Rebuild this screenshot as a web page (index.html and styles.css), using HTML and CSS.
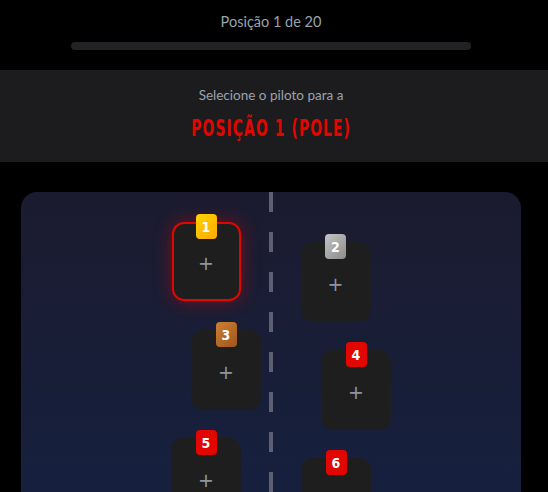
FILE: index.html
```html
<!DOCTYPE html>
<html lang="pt">
<head>
<meta charset="utf-8">
<title>Grid</title>
<link rel="stylesheet" href="styles.css">
</head>
<body>
<div class="progress">
  <div class="progress-label">Posição 1 de 20</div>
  <div class="progress-bar"></div>
</div>
<section class="prompt">
  <div class="prompt-sub">Selecione o piloto para a</div>
  <div class="prompt-title">POSIÇÃO 1 (POLE)</div>
</section>
<div class="track-wrap">
  <div class="track">
    <div class="grid-row">
      <div class="slot selected"><span class="badge gold">1</span><span class="plus">+</span></div>
      <div class="slot right"><span class="badge silver">2</span><span class="plus">+</span></div>
    </div>
    <div class="grid-row shifted">
      <div class="slot"><span class="badge bronze">3</span><span class="plus">+</span></div>
      <div class="slot right"><span class="badge red">4</span><span class="plus">+</span></div>
    </div>
    <div class="grid-row">
      <div class="slot"><span class="badge red">5</span><span class="plus">+</span></div>
      <div class="slot right"><span class="badge red">6</span><span class="plus">+</span></div>
    </div>
  </div>
</div>
</body>
</html>
```
FILE: styles.css
```css
html, body {
  margin: 0;
  padding: 0;
  background: #000;
  font-family: "Lato", "Noto Sans", sans-serif;
  height: 492px;
  overflow: hidden;
}
.progress {
  padding: 12px 6px 0 0;
  display: flex;
  flex-direction: column;
  align-items: center;
}
.progress-label {
  color: #9aa3ad;
  font-size: 14.5px;
  line-height: 20px;
  height: 20px;
}
.progress-bar {
  margin-top: 10px;
  width: 400px;
  height: 8px;
  border-radius: 4px;
  background: #222224;
}
.prompt {
  margin-top: 20px;
  height: 92px;
  padding-right: 6px;
  background: #1c1c1e;
  display: flex;
  flex-direction: column;
  align-items: center;
}
.prompt-sub {
  margin-top: 16px;
  color: #9aa3ad;
  font-size: 13.5px;
  line-height: 18px;
}
.prompt-title {
  margin-top: 12px;
  color: #e10600;
  font-family: "DejaVu Sans Condensed", "Liberation Sans Narrow", sans-serif;
  font-weight: 700;
  font-size: 22px;
  letter-spacing: 1.6px;
  line-height: 24px;
  transform: scale(0.7, 1.08);
}
.track-wrap {
  padding: 30px 27px 0 21px;
}
.track {
  position: relative;
  height: 300px;
  overflow: hidden;
  border-radius: 16px 16px 0 0;
  background: linear-gradient(180deg, #1b1b2f 0%, #16203e 100%);
  padding-top: 30px;
  display: flex;
  flex-direction: column;
  gap: 8px;
  box-sizing: border-box;
}
.track::before {
  content: "";
  position: absolute;
  top: 0;
  bottom: 0;
  left: 248px;
  width: 4px;
  background: repeating-linear-gradient(180deg, #5e5f72 0 20px, transparent 20px 40px);
}
.grid-row {
  display: flex;
  justify-content: center;
  align-items: flex-start;
  gap: 60px;
  flex-shrink: 0;
}
.grid-row.shifted {
  padding-left: 40px;
}
.slot {
  position: relative;
  width: 70px;
  height: 80px;
  flex-shrink: 0;
  box-sizing: border-box;
  border-radius: 12px;
  background: #1e1e1f;
  display: flex;
  align-items: center;
  justify-content: center;
}
.slot.right {
  margin-top: 20px;
}
.slot.selected {
  border: 2px solid #e10600;
  box-shadow: 0 0 18px rgba(225, 6, 0, 0.45);
  width: 69px;
  height: 79px;
}
.plus {
  color: #8a96a2;
  font-family: "DejaVu Sans", sans-serif;
  font-size: 19px;
  line-height: 20px;
  margin-top: 3px;
}
.badge {
  position: absolute;
  top: -8px;
  left: 50%;
  margin-left: -10.5px;
  width: 21px;
  height: 25px;
  border-radius: 4px;
  display: flex;
  align-items: center;
  justify-content: center;
  color: #fff;
  font-family: "DejaVu Sans Condensed", sans-serif;
  font-weight: 700;
  font-size: 14px;
}
.slot.selected .badge {
  top: -10px;
}
.badge.gold { background: linear-gradient(135deg, #ffd400, #ffa800); }
.badge.silver { background: linear-gradient(135deg, #c4c4c4, #8c8c8c); }
.badge.bronze { background: linear-gradient(135deg, #cd7f32, #a0561c); }
.badge.red { background: #e10600; }
```
